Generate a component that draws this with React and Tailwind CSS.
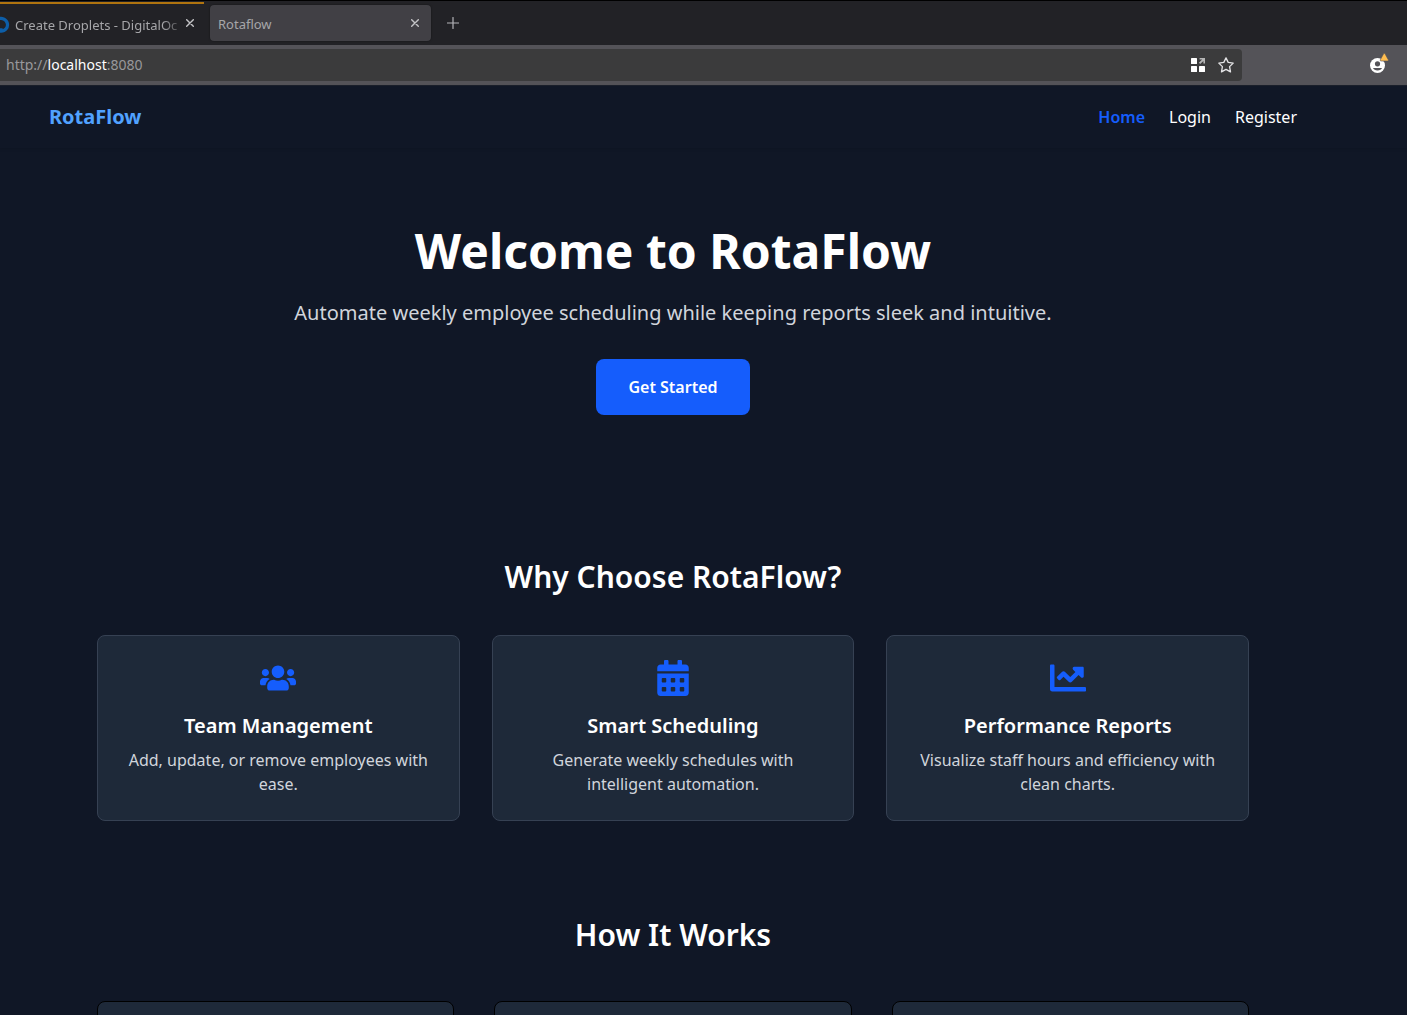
import React from "react";
import { FaUsers, FaCalendarAlt, FaChartLine } from "react-icons/fa";

const features = [
  {
    Icon: FaUsers,
    title: "Team Management",
    text: "Add, update, or remove employees with ease.",
  },
  {
    Icon: FaCalendarAlt,
    title: "Smart Scheduling",
    text: "Generate weekly schedules with intelligent automation.",
  },
  {
    Icon: FaChartLine,
    title: "Performance Reports",
    text: "Visualize staff hours and efficiency with clean charts.",
  },
];

function CloseIcon() {
  return (
    <svg width="8" height="8" viewBox="0 0 8 8" fill="none" stroke="#c4c4c7" strokeWidth="1.4" strokeLinecap="round" aria-hidden="true">
      <path d="M0.7 0.7 7.3 7.3M7.3 0.7 0.7 7.3" />
    </svg>
  );
}

function TabBar() {
  return (
    <div className="flex h-[45px] border-t border-black bg-[#222226] text-[13px] leading-5 text-[#a6a6a9]">
      <div className="flex w-[204px] flex-col pt-px">
        <div className="h-0.5 bg-[#b0740f]" />
        <div className="flex flex-1 items-center">
          <svg width="10" height="18" viewBox="0 0 10 18" fill="none" aria-hidden="true" className="shrink-0">
            <path d="M-2 3.2A6.400 6.400 0 1 1 1 15.2v-3" stroke="#0d5ea8" strokeWidth="3.2" />
          </svg>
          <button className="ml-[5px] w-[167px] overflow-hidden text-left whitespace-nowrap [mask-image:linear-gradient(to_right,#000_148px,transparent_170px)]">
            Create Droplets - DigitalOc
          </button>
          <button aria-label="Close tab" className="ml-1 shrink-0 pb-1">
            <CloseIcon />
          </button>
        </div>
      </div>
      <div className="mt-1 ml-[6px] flex h-9 w-[221px] items-center justify-between rounded-sm bg-[#414045] pr-3 pl-2 shadow-[0_0_2px_rgba(0,0,0,0.5)]">
        <button className="pt-px">Rotaflow</button>
        <button aria-label="Close tab">
          <CloseIcon />
        </button>
      </div>
      <button aria-label="New tab" className="ml-4">
        <svg width="12" height="12" viewBox="0 0 12 12" fill="none" stroke="#b4b4b8" strokeWidth="1.2" strokeLinecap="round" aria-hidden="true">
          <path d="M6 .5v11M.5 6h11" />
        </svg>
      </button>
    </div>
  );
}

function AddressBar() {
  return (
    <div className="flex h-[41px] items-center justify-between border-b border-[#1b202b] bg-[#545358] pr-[18px]">
      <div className="mr-[127px] flex h-8 flex-1 items-center rounded-r-sm bg-[#3b3b3c] pr-2 pl-[6px] text-sm text-[#98989b]">
        <span>http://</span>
        <input
          aria-label="Address"
          defaultValue="localhost"
          className="min-w-0 bg-transparent text-white outline-none [field-sizing:content]"
        />
        <span className="flex-1">:8080</span>
        <button aria-label="Sidebar apps">
          <svg width="14" height="14" viewBox="0 0 14 14" aria-hidden="true">
            <g fill="#fff">
              <rect width="6" height="6" rx=".6" />
              <rect y="8" width="6" height="6" rx=".6" />
              <rect x="8" y="8" width="6" height="6" rx=".6" />
            </g>
            <path d="M8.600 0H14v5.400h-1.600V2.900L9.200 6.100 7.900 4.800 11.100 1.600H8.600z" fill="#b5b5b5" />
          </svg>
        </button>
        <button aria-label="Bookmark this page" className="ml-[13px]">
          <svg width="16" height="16" viewBox="0 0 16 16" fill="none" stroke="#e4e4e6" strokeWidth="1.3" strokeLinejoin="round" aria-hidden="true">
            <path d="M8 .9 10.2 5.4 15.2 6.1 11.6 9.6 12.5 14.9 8 12.4 3.5 14.9 4.4 9.6.8 6.1 5.8 5.4z" />
          </svg>
        </button>
      </div>
      <button aria-label="Account" className="pb-[3px]">
        <svg width="20" height="21" viewBox="0 0 20 21" aria-hidden="true">
          <circle cx="8.5" cy="12.5" r="7.5" fill="#fff" />
          <circle cx="8.5" cy="10.8" r="2.6" fill="#545358" />
          <path d="M4 15h9c-.6 1.600-2.300 2.500-4.500 2.500S4.600 16.600 4 15z" fill="#545358" />
          <path d="M14.600 .8q.7-.9 1.400 0l3.300 6q.4 1.200-.7 1.200h-6.600q-1.100 0-.7-1.200z" fill="#ffbd4f" stroke="#545358" strokeWidth=".6" />
        </svg>
      </button>
    </div>
  );
}

export default function App() {
  return (
    <div className="h-screen overflow-hidden bg-[#101726] font-['Noto_Sans',sans-serif] text-white">
      <TabBar />
      <AddressBar />
      <div>
        <header className="pr-[61px] shadow-[0_1px_3px_rgba(0,0,0,0.12)]">
          <div className="mx-auto flex h-[62px] max-w-7xl items-center justify-between px-4">
            <a href="#" className="text-xl font-bold text-[#51a2ff]">
              RotaFlow
            </a>
            <nav className="flex gap-6">
              <a href="#" className="font-semibold text-[#155dfc]">Home</a>
              <a href="#">Login</a>
              <a href="#">Register</a>
            </nav>
          </div>
        </header>
        <main className="pr-[61px]">
          <section className="flex flex-col items-center pt-[79px] text-center">
            <h1 className="mb-6 text-5xl leading-none font-bold">Welcome to RotaFlow</h1>
            <p className="mb-8 text-xl text-[#d1d5dc]">
              Automate weekly employee scheduling while keeping reports sleek and intuitive.
            </p>
            <button className="rounded-lg bg-[#155dfc] px-8 py-4 font-semibold">Get Started</button>
          </section>
          <section className="mx-auto max-w-6xl pt-36 text-center">
            <h2 className="mb-10 text-3xl font-semibold">Why Choose RotaFlow?</h2>
            <div className="grid grid-cols-3 gap-8">
              {features.map(({ Icon, title, text }) => (
                <article key={title} className="rounded-lg border border-[#364153] bg-[#1e2939] p-6">
                  <Icon className="mx-auto mb-4 text-4xl text-[#155dfc]" />
                  <h3 className="mb-2 text-xl font-semibold">{title}</h3>
                  <p className="text-[#d1d5dc]">{text}</p>
                </article>
              ))}
            </div>
          </section>
          <section className="mx-auto max-w-6xl pt-24 text-center">
            <h2 className="mb-12 text-3xl font-semibold">How It Works</h2>
            <div className="grid grid-cols-3 gap-10">
              <div className="h-48 rounded-lg border border-black bg-[#1e2939]" />
              <div className="h-48 rounded-lg border border-black bg-[#1e2939]" />
              <div className="h-48 rounded-lg border border-black bg-[#1e2939]" />
            </div>
          </section>
        </main>
      </div>
    </div>
  );
}
